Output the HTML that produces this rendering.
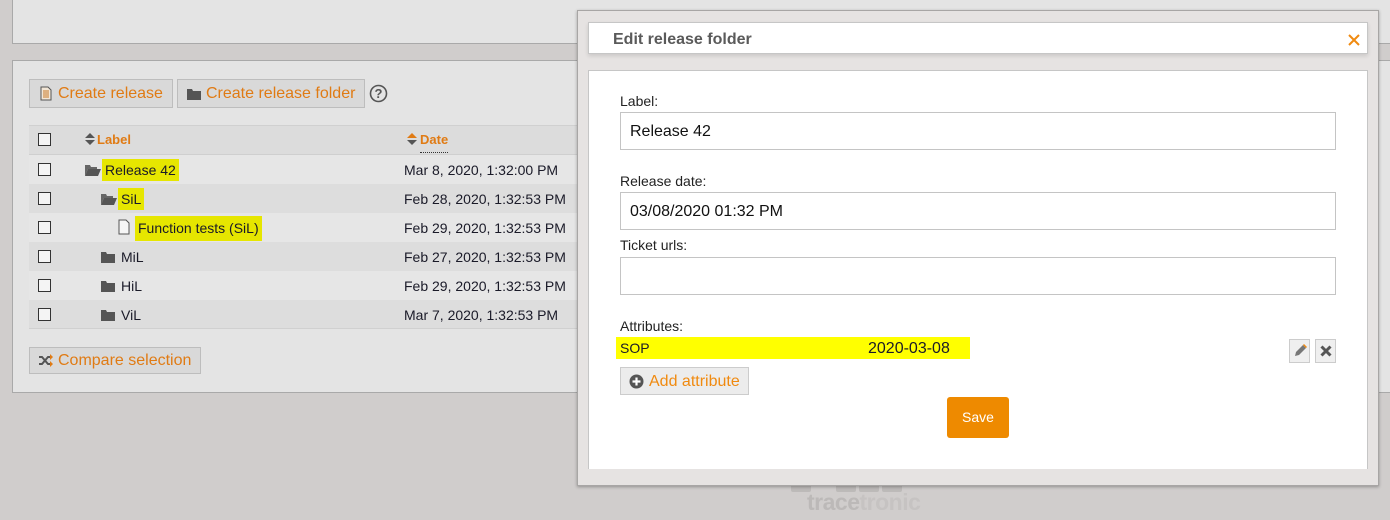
<!DOCTYPE html>
<html><head><style>
*{box-sizing:border-box;margin:0;padding:0}
body{width:1390px;height:520px;background:#d0cdcc;font-family:"Liberation Sans",Arial,sans-serif;position:relative;overflow:hidden;font-size:14px;color:#1a1a28}
.abs{position:absolute}
.panel{background:#e4e4e4;border:1px solid #a9a9a9;border-right:none}
.btn{position:absolute;background:#d9d9d9;border:1px solid #bdbdbd;color:#e07b14;font-size:16px;line-height:27px;padding-left:28px}
.row{position:absolute;left:29px;width:548px;height:29px;line-height:30px;font-size:14px}
.cb{position:absolute;left:9px;top:8px;width:13px;height:13px;border:1px solid #333;background:#f4f4f4}
.hl{background:#e6e600;padding:0 3px}
.dt{position:absolute;left:375px}
.lbl{position:absolute;font-size:14px;color:#222}
.inp{position:absolute;left:620px;width:716px;height:38px;border:1px solid #c4c4c4;background:#fff;font-size:16px;line-height:38px;padding-left:9px;color:#111}
</style></head><body>
<div class="abs panel" style="left:12px;top:-1px;width:1380px;height:45px"></div>
<div class="abs panel" style="left:12px;top:60px;width:1380px;height:333px"></div>

<div class="btn" style="left:29px;top:79px;width:144px;height:29px">
<svg class="abs" style="left:10px;top:6px" width="12" height="15" viewBox="0 0 12 15"><path d="M1 1h7l3 3v10H1z" fill="#f2e6d6" stroke="#555"/><path d="M3 5h6M3 7h6M3 9h6M3 11h6" stroke="#c87a2a"/></svg>Create release</div>
<div class="btn" style="left:177px;top:79px;width:188px;height:29px">
<svg class="abs" style="left:9px;top:8px" width="14" height="12" viewBox="0 0 14 12"><path d="M0 1h5l1 2h8v9H0z" fill="#555"/></svg>Create release folder</div>
<svg class="abs" style="left:369px;top:84px" width="19" height="19" viewBox="0 0 19 19"><circle cx="9.5" cy="9.5" r="8" fill="none" stroke="#555" stroke-width="1.6"/><text x="9.5" y="14" text-anchor="middle" font-size="13" font-weight="bold" fill="#555" font-family="Liberation Sans">?</text></svg>

<div class="abs" style="left:29px;top:125px;width:548px;height:30px;background:#dcdcdc;border-top:1px solid #d0d0d0;border-bottom:1px solid #cfcfcf"></div>
<div class="row" style="top:125px;height:30px;line-height:30px"><div class="cb"></div>
<svg class="abs" style="left:56px;top:8px" width="10" height="12" viewBox="0 0 10 12"><path d="M0 5L5 0l5 5zM0 7h10l-5 5z" fill="#555"/></svg>
<b class="abs" style="left:68px;color:#e07b14;font-size:13px">Label</b>
<svg class="abs" style="left:378px;top:8px" width="10" height="12" viewBox="0 0 10 12"><path d="M0 5L5 0l5 5z" fill="#e07b14"/><path d="M0 7h10l-5 5z" fill="#555"/></svg>
<b class="abs" style="left:391px;color:#e07b14;font-size:13px;line-height:24px;top:3px;border-bottom:1px dotted #333">Date</b></div>

<div class="row" style="top:155px;background:#e6e6e6"><div class="cb"></div><svg class="abs" style="left:56px;top:9px" width="16" height="12" viewBox="0 0 16 12"><path d="M0 1h5l1 2h6v2H3L0 12z" fill="#666"/><path d="M3 5h13l-3 7H0z" fill="#555"/></svg><span class="abs hl" style="left:73px;top:4px;line-height:22px">Release 42</span><span class="dt">Mar 8, 2020, 1:32:00 PM</span></div>
<div class="row" style="top:184px;background:#dddddd"><div class="cb"></div><svg class="abs" style="left:72px;top:9px" width="16" height="12" viewBox="0 0 16 12"><path d="M0 1h5l1 2h6v2H3L0 12z" fill="#666"/><path d="M3 5h13l-3 7H0z" fill="#555"/></svg><span class="abs hl" style="left:89px;top:4px;line-height:22px">SiL</span><span class="dt">Feb 28, 2020, 1:32:53 PM</span></div>
<div class="row" style="top:213px;background:#e6e6e6"><div class="cb"></div><svg class="abs" style="left:89px;top:6px" width="12" height="16" viewBox="0 0 12 16"><path d="M1 1h7l3 3v11H1z" fill="#f6f6f6" stroke="#555"/></svg><span class="abs hl" style="left:106px;top:3px;line-height:25px">Function tests (SiL)</span><span class="dt">Feb 29, 2020, 1:32:53 PM</span></div>
<div class="row" style="top:242px;background:#dddddd"><div class="cb"></div><svg class="abs" style="left:72px;top:9px" width="14" height="12" viewBox="0 0 14 12"><path d="M0 1h5l1 2h8v9H0z" fill="#555"/></svg><span class="abs" style="left:92px">MiL</span><span class="dt">Feb 27, 2020, 1:32:53 PM</span></div>
<div class="row" style="top:271px;background:#e6e6e6"><div class="cb"></div><svg class="abs" style="left:72px;top:9px" width="14" height="12" viewBox="0 0 14 12"><path d="M0 1h5l1 2h8v9H0z" fill="#555"/></svg><span class="abs" style="left:92px">HiL</span><span class="dt">Feb 29, 2020, 1:32:53 PM</span></div>
<div class="row" style="top:300px;background:#dddddd;border-bottom:1px solid #d0d0d0"><div class="cb"></div><svg class="abs" style="left:72px;top:9px" width="14" height="12" viewBox="0 0 14 12"><path d="M0 1h5l1 2h8v9H0z" fill="#555"/></svg><span class="abs" style="left:92px">ViL</span><span class="dt">Mar 7, 2020, 1:32:53 PM</span></div>

<div class="btn" style="left:29px;top:347px;width:172px;height:27px;line-height:26px">
<svg class="abs" style="left:8px;top:6px" width="15" height="13" viewBox="0 0 15 13"><path d="M1 3h3l6 7h3M1 10h3l6-7h3" fill="none" stroke="#555" stroke-width="2"/><path d="M12 0l3 3-3 3zM12 7l3 3-3 3z" fill="#e07b14"/></svg>Compare selection</div>

<div class="abs" style="left:791px;top:480px;width:20px;height:12px;background:#bdbab9;border-radius:2px"></div>
<div class="abs" style="left:836px;top:480px;width:20px;height:12px;background:#bdbab9;border-radius:2px"></div>
<div class="abs" style="left:859px;top:480px;width:20px;height:12px;background:#bdbab9;border-radius:2px"></div>
<div class="abs" style="left:882px;top:480px;width:20px;height:12px;background:#bdbab9;border-radius:2px"></div>
<div class="abs" style="left:807px;top:489px;font-size:23px;font-weight:bold;color:#bcb9b8;letter-spacing:-0.5px">trace<span style="color:#c6c3c2">tronic</span></div>

<div class="abs" style="left:577px;top:10px;width:802px;height:476px;background:#e6e3e2;border:1px solid #a8a6a5;box-shadow:0 1px 3px rgba(0,0,0,.3)"></div>
<div class="abs" style="left:588px;top:22px;width:780px;height:32px;background:#fff;border:1px solid #c6c6c6;box-shadow:0 2px 4px rgba(0,0,0,.12)">
<b class="abs" style="left:24px;top:8px;font-size:16px;color:#5a5a5a">Edit release folder</b>
<svg class="abs" style="left:759px;top:11px" width="12" height="12" viewBox="0 0 12 12"><path d="M1 1l10 10M11 1L1 11" stroke="#f08a10" stroke-width="2"/></svg></div>
<div class="abs" style="left:588px;top:70px;width:780px;height:399px;background:#fff;border:1px solid #c6c6c6;border-bottom:none"></div>

<div class="lbl" style="left:620px;top:93px">Label:</div>
<div class="inp" style="top:112px">Release 42</div>
<div class="lbl" style="left:620px;top:173px">Release date:</div>
<div class="inp" style="top:192px">03/08/2020 01:32 PM</div>
<div class="lbl" style="left:620px;top:237px">Ticket urls:</div>
<div class="inp" style="top:257px"></div>
<div class="lbl" style="left:620px;top:318px">Attributes:</div>
<div class="abs" style="left:616px;top:337px;width:354px;height:22px;background:#ffff00;font-size:14px;line-height:23px">
<span class="abs" style="left:4px">SOP</span><span class="abs" style="left:252px;font-size:16px">2020-03-08</span></div>
<div class="abs" style="left:1289px;top:339px;width:21px;height:24px;background:#efefef;border:1px solid #ccc"><svg class="abs" style="left:3px;top:4px" width="14" height="14" viewBox="0 0 14 14"><path d="M2 12l1-4 7-7 3 3-7 7z" fill="#777"/><path d="M10 1l3 3 1-1-3-3z" fill="#f08a10"/></svg></div>
<div class="abs" style="left:1315px;top:339px;width:21px;height:24px;background:#efefef;border:1px solid #ccc"><svg class="abs" style="left:4px;top:5px" width="12" height="12" viewBox="0 0 12 12"><path d="M1.5 1.5l9 9M10.5 1.5l-9 9" stroke="#555" stroke-width="3"/></svg></div>
<div class="abs" style="left:620px;top:367px;width:129px;height:28px;background:#ececec;border:1px solid #ccc;color:#f08a10;font-size:16px;line-height:27px;padding-left:28px">
<svg class="abs" style="left:8px;top:6px" width="15" height="15" viewBox="0 0 15 15"><circle cx="7.5" cy="7.5" r="7" fill="#555"/><path d="M7.5 3.5v8M3.5 7.5h8" stroke="#fff" stroke-width="2.2"/></svg>Add attribute</div>
<div class="abs" style="left:947px;top:397px;width:62px;height:41px;background:#ee8a00;border-radius:3px;color:#fff;font-size:14px;line-height:40px;text-align:center">Save</div>
</body></html>
